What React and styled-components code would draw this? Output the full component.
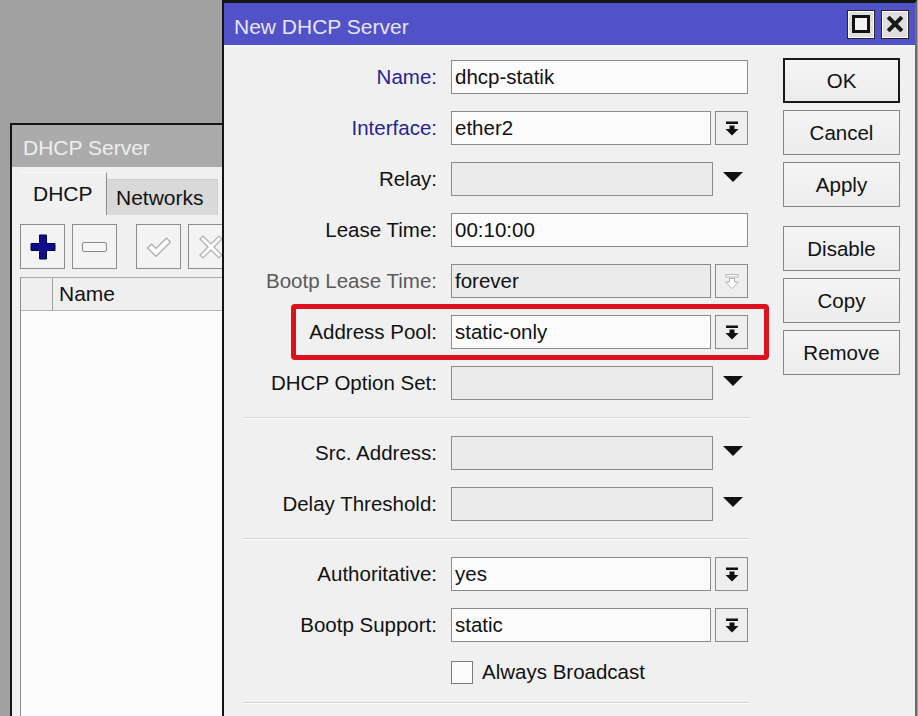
import React from 'react'
import styled, { createGlobalStyle } from 'styled-components'

const GlobalStyle = createGlobalStyle`
  html, body { margin: 0; padding: 0; }
  body {
    background: #a1a1a1;
    font-family: "Liberation Sans", Arial, sans-serif;
  }
  * { box-sizing: border-box; }
`

const Desktop = styled.div`
  position: relative;
  width: 918px;
  height: 716px;
  overflow: hidden;
  background: #a1a1a1;
`

/* ---------- left list window ---------- */

const ListWindow = styled.div`
  position: absolute;
  left: 10px;
  top: 123px;
  width: 300px;
  height: 640px;
  border: 2px solid #151515;
  border-right: none;
  border-bottom: none;
  background: #f0f0f0;
  display: flex;
  flex-direction: column;
  z-index: 1;
`

const ListTitle = styled.div`
  height: 42px;
  flex-shrink: 0;
  background: #ababab;
  color: #eeeeee;
  font-size: 21px;
  padding: 4px 0 0 11px;
  display: flex;
  align-items: center;
`

const ListBody = styled.div`
  flex: 1;
  display: flex;
  flex-direction: column;
  padding-left: 8px;
`

const Tabs = styled.div`
  display: flex;
  align-items: flex-end;
  padding-top: 5px;
`

const Tab = styled.div`
  height: ${p => (p.$active ? '43px' : '36px')};
  width: ${p => p.$w}px;
  padding-left: ${p => (p.$active ? '13px' : '9px')};
  display: flex;
  align-items: center;
  font-size: 21px;
  color: #111;
  background: ${p => (p.$active ? '#f0f0f0' : '#d9d9d9')};
  border-right: 1px solid ${p => (p.$active ? '#8d8d8d' : '#cfcfcf')};
  border-top: 1px solid ${p => (p.$active ? '#fafafa' : '#cfcfcf')};
`

const Toolbar = styled.div`
  display: flex;
  margin-top: 9px;
`

const ToolButton = styled.div`
  width: 45px;
  height: 45px;
  margin-left: ${p => p.$gap}px;
  border: 1px solid #8c8c8c;
  background: #f3f3f3;
  display: flex;
  align-items: center;
  justify-content: center;
  flex-shrink: 0;
`

const TableHead = styled.div`
  margin-top: 8px;
  height: 34px;
  display: flex;
  background: #efefef;
  border-top: 1px solid #a8a8a8;
  border-left: 1px solid #8c8c8c;
  border-bottom: 1px solid #b4b4b4;
`

const HeadCell = styled.div`
  width: ${p => (p.$w ? `${p.$w}px` : 'auto')};
  flex: ${p => (p.$w ? 'none' : '1')};
  border-right: ${p => (p.$w ? '1px solid #a0a0a0' : 'none')};
  padding-left: 6px;
  display: flex;
  align-items: center;
  font-size: 21px;
  color: #111;
`

const TableBody = styled.div`
  flex: 1;
  background: #fbfbfb;
  border-left: 1px solid #8c8c8c;
`

/* ---------- dialog ---------- */

const Dialog = styled.div`
  position: absolute;
  left: 222px;
  top: 0;
  width: 695px;
  height: 760px;
  border: 2px solid #141414;
  border-top-width: 3px;
  border-right-color: #6a6a6a;
  background: #f0f0f0;
  z-index: 2;
  display: flex;
  flex-direction: column;
`

const TitleBar = styled.div`
  height: 44px;
  flex-shrink: 0;
  background: #5151c8;
  border-bottom: 2px solid #f7f7fb;
  display: flex;
  align-items: center;
  padding: 0 6px 0 10px;
`

const TitleText = styled.div`
  flex: 1;
  color: #e6e6f6;
  font-size: 21px;
  padding-top: 6px;
`

const TitleButtons = styled.div`
  display: flex;
  gap: 6px;
`

const TitleButton = styled.div`
  width: 28px;
  height: 29px;
  border: 1px solid #262626;
  box-shadow: inset 0 0 0 1px #ffffff;
  background: #dedede;
  display: flex;
  align-items: center;
  justify-content: center;
`

const DialogBody = styled.div`
  flex: 1;
  display: flex;
  align-items: flex-start;
`

const Form = styled.div`
  display: flex;
  flex-direction: column;
  gap: 17px;
  padding-top: 13px;
`

const Row = styled.div`
  position: relative;
  display: flex;
  align-items: center;
  height: ${p => p.$h || 34}px;

  ${p =>
    p.$highlight &&
    `
    &::before {
      content: '';
      position: absolute;
      left: 67px;
      right: -19px;
      top: -11px;
      bottom: -11px;
      border: 5px solid #dc1220;
      border-radius: 4px;
      pointer-events: none;
    }
  `}
`

const toneColor = {
  link: '#25258f',
  muted: '#5a5a5a',
  plain: '#111111',
}

const Label = styled.div`
  width: 213px;
  margin-right: 14px;
  text-align: right;
  font-size: 20.5px;
  color: ${p => toneColor[p.$tone || 'plain']};
`

const Field = styled.div`
  display: flex;
  align-items: center;
`

const Box = styled.div`
  width: ${p => p.$w}px;
  height: 34px;
  border: 1px solid #8b8b8b;
  background: ${p => (p.$gray ? '#ebebeb' : '#fbfbfb')};
  padding-left: 3px;
  display: flex;
  align-items: center;
  font-size: 20.5px;
  color: #111;
  white-space: nowrap;
`

const DropButton = styled.div`
  width: 33px;
  height: 34px;
  margin-left: 4px;
  border: 1px solid #8b8b8b;
  background: #eeeeee;
  display: flex;
  align-items: center;
  justify-content: center;
`

const TriangleCell = styled.div`
  width: 35px;
  height: 34px;
  display: flex;
  justify-content: center;
  align-items: center;
  padding: 0 0 4px 4px;
`

const Triangle = styled.div`
  width: 0;
  height: 0;
  border-left: 10px solid transparent;
  border-right: 10px solid transparent;
  border-top: 10px solid #111;
`

const Separator = styled.div`
  margin-left: 19px;
  width: 507px;
  height: 2px;
  border-top: 1px solid #d3d3d3;
  border-bottom: 1px solid #fdfdfd;
`

const CheckBox = styled.div`
  width: 22px;
  height: 23px;
  margin-left: 227px;
  border: 1px solid #7a7a7a;
  background: #fbfbfb;
`

const CheckLabel = styled.div`
  margin-left: 9px;
  font-size: 20.5px;
  color: #111;
`

const ButtonColumn = styled.div`
  display: flex;
  flex-direction: column;
  gap: 7px;
  margin-left: 33px;
  padding-top: 11px;
`

const Button = styled.div`
  width: 117px;
  height: 45px;
  margin-top: ${p => p.$space || 0}px;
  border: ${p => (p.$primary ? '2px solid #181818' : '1px solid #858585')};
  background: linear-gradient(#f5f5f5, #ececec);
  display: flex;
  align-items: center;
  justify-content: center;
  font-size: 20.5px;
  color: #111;
`

/* ---------- icons ---------- */

const DropIcon = ({ faded }) => (
  <svg width="14" height="15" viewBox="0 0 14 15">
    <rect x="1" y="0.5" width="12" height="2.5" fill={faded ? '#fff' : '#111'} stroke={faded ? '#a9a9a9' : 'none'} strokeWidth="0.8" />
    <path
      d="M4.5 4.5h5v3.5h4L7 14.5 0.5 8h4z"
      fill={faded ? '#fff' : '#111'}
      stroke={faded ? '#a9a9a9' : 'none'}
      strokeWidth="0.9"
    />
  </svg>
)

const PlusIcon = () => (
  <svg width="26" height="26" viewBox="0 0 26 26">
    <path d="M9.5 1h7v8.5h8.5v7h-8.5v8.5h-7v-8.5h-8.5v-7h8.5z" fill="#0d0d8e" stroke="#03033f" strokeWidth="1" />
  </svg>
)

const MinusIcon = () => (
  <svg width="25" height="10" viewBox="0 0 25 10">
    <rect x="0.5" y="0.5" width="24" height="9" rx="1.5" fill="#f6f6f6" stroke="#8a8a8a" />
  </svg>
)

const CheckIcon = () => (
  <svg width="26" height="22" viewBox="0 0 26 22">
    <path d="M1.5 12 L5.5 8 L10 12.5 L20.5 2 L24.5 6 L10 20.5 Z" fill="#fbfbfb" stroke="#a9a9a9" strokeWidth="1.2" />
  </svg>
)

const CrossIcon = () => (
  <svg width="24" height="24" viewBox="0 0 24 24">
    <path
      d="M4 1 L12 9 L20 1 L23 4 L15 12 L23 20 L20 23 L12 15 L4 23 L1 20 L9 12 L1 4 Z"
      fill="#fbfbfb"
      stroke="#b0b0b0"
      strokeWidth="1.2"
    />
  </svg>
)

const MaximizeIcon = () => (
  <svg width="18" height="18" viewBox="0 0 18 18">
    <rect x="1.5" y="1.5" width="15" height="15" fill="#f4f4f4" stroke="#111" strokeWidth="3" />
  </svg>
)

const CloseIcon = () => (
  <svg width="16" height="16" viewBox="0 0 16 16">
    <path d="M2.5 2.5 L13.5 13.5 M13.5 2.5 L2.5 13.5" stroke="#1a1a1a" strokeWidth="4" strokeLinecap="square" />
  </svg>
)

/* ---------- data ---------- */

const fields = [
  { label: 'Name', tone: 'link', value: 'dhcp-statik', kind: 'text' },
  { label: 'Interface', tone: 'link', value: 'ether2', kind: 'select' },
  { label: 'Relay', kind: 'combo' },
  { label: 'Lease Time', value: '00:10:00', kind: 'text' },
  { label: 'Bootp Lease Time', tone: 'muted', value: 'forever', kind: 'select', disabled: true },
  { label: 'Address Pool', value: 'static-only', kind: 'select', highlight: true },
  { label: 'DHCP Option Set', kind: 'combo' },
  'sep',
  { label: 'Src. Address', kind: 'combo' },
  { label: 'Delay Threshold', kind: 'combo' },
  'sep',
  { label: 'Authoritative', value: 'yes', kind: 'select' },
  { label: 'Bootp Support', value: 'static', kind: 'select' },
]

const buttons = [
  { text: 'OK', primary: true },
  { text: 'Cancel' },
  { text: 'Apply' },
  { text: 'Disable', space: 12 },
  { text: 'Copy' },
  { text: 'Remove' },
]

function FieldControl({ f }) {
  if (f.kind === 'text') {
    return (
      <Field>
        <Box $w={297}>{f.value}</Box>
      </Field>
    )
  }
  if (f.kind === 'select') {
    return (
      <Field>
        <Box $w={260} $gray={f.disabled}>{f.value}</Box>
        <DropButton>
          <DropIcon faded={f.disabled} />
        </DropButton>
      </Field>
    )
  }
  return (
    <Field>
      <Box $w={262} $gray />
      <TriangleCell>
        <Triangle />
      </TriangleCell>
    </Field>
  )
}

export default function App() {
  return (
    <Desktop>
      <GlobalStyle />

      <ListWindow>
        <ListTitle>DHCP Server</ListTitle>
        <ListBody>
          <Tabs>
            <Tab $active $w={87}>DHCP</Tab>
            <Tab $w={111}>Networks</Tab>
          </Tabs>
          <Toolbar>
            <ToolButton $gap={0}><PlusIcon /></ToolButton>
            <ToolButton $gap={7}><MinusIcon /></ToolButton>
            <ToolButton $gap={19}><CheckIcon /></ToolButton>
            <ToolButton $gap={7}><CrossIcon /></ToolButton>
          </Toolbar>
          <TableHead>
            <HeadCell $w={32} />
            <HeadCell>Name</HeadCell>
          </TableHead>
          <TableBody />
        </ListBody>
      </ListWindow>

      <Dialog>
        <TitleBar>
          <TitleText>New DHCP Server</TitleText>
          <TitleButtons>
            <TitleButton><MaximizeIcon /></TitleButton>
            <TitleButton><CloseIcon /></TitleButton>
          </TitleButtons>
        </TitleBar>
        <DialogBody>
          <Form>
            {fields.map((f, i) =>
              f === 'sep' ? (
                <Separator key={i} />
              ) : (
                <Row key={i} $highlight={f.highlight}>
                  <Label $tone={f.tone}>{f.label}:</Label>
                  <FieldControl f={f} />
                </Row>
              )
            )}
            <Row $h={26}>
              <CheckBox />
              <CheckLabel>Always Broadcast</CheckLabel>
            </Row>
            <Separator />
          </Form>
          <ButtonColumn>
            {buttons.map(b => (
              <Button key={b.text} $primary={b.primary} $space={b.space}>
                {b.text}
              </Button>
            ))}
          </ButtonColumn>
        </DialogBody>
      </Dialog>
    </Desktop>
  )
}
